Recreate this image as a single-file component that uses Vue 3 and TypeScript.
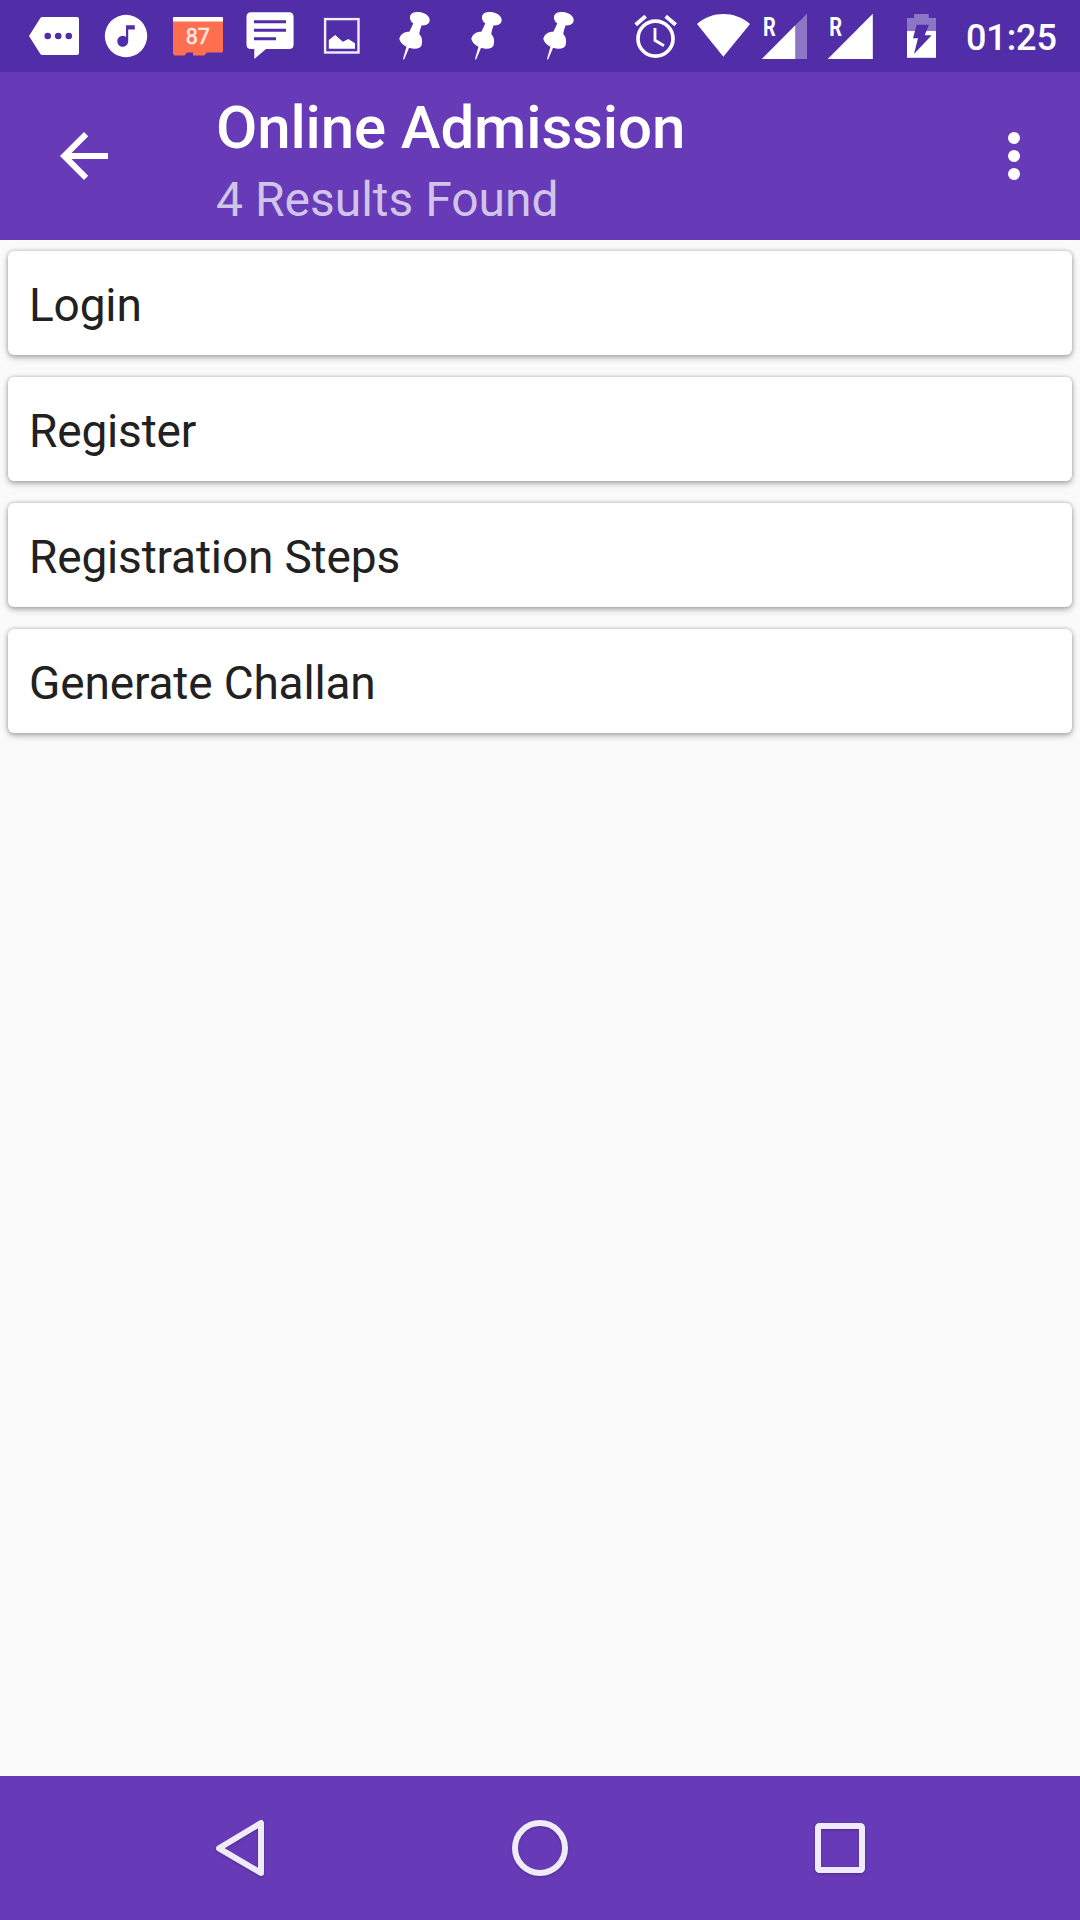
<script setup lang="ts">
const results: string[] = ['Login', 'Register', 'Registration Steps', 'Generate Challan']
const pins: number[] = [1, 2, 3]
</script>

<template>
  <div class="screen">
    <header class="status-bar">
      <div class="notifications">
        <svg viewBox="18 0 72 72" class="notice">
          <path fill="#fff" d="M29 36L40.2 18.3Q41 17 42.5 17H77Q79 17 79 19V53Q79 55 77 55H42.5Q41 55 40.2 53.7Z" />
          <g fill="#512da8"><circle cx="47.7" cy="36" r="3.3" /><circle cx="58.2" cy="36" r="3.3" /><circle cx="68.8" cy="36" r="3.3" /></g>
        </svg>
        <svg viewBox="90 0 72 72" class="notice">
          <circle cx="126" cy="36" r="21.2" fill="#fff" />
          <path fill="#512da8" d="M126 25.2H134.8V29.4H128.2V41.3A5.5 5.5 0 1 1 126 36.9Z" />
        </svg>
        <svg viewBox="162 0 72 72" class="notice">
          <path fill="#ff6e4e" d="M173 21H223V51.5L222 52.6H207L204.2 55.6H193V52.6H187L184.5 55.6H174.5L173 54Z" />
          <path fill="#fff" d="M173 21.6V18.2Q173 17 174.2 17H221.8Q223 17 223 18.2V21.6Z" />
          <text x="197.8" y="43.8" text-anchor="middle" font-size="21.5" fill="#ffe9e4" stroke="#ffe9e4" stroke-width=".5">87</text>
        </svg>
        <svg viewBox="234 0 72 72" class="notice">
          <path fill="#fff" d="M251 12.3H289Q293.6 12.3 293.6 17V44.5Q293.6 49 289 49H266L254.3 59V49H251Q246.5 49 246.5 44.5V17Q246.5 12.3 251 12.3Z" />
          <path fill="#512da8" d="M254 20.2H286V23.2H254ZM254 28.8H286V31.8H254ZM254 37.2H276V40.2H254Z" />
        </svg>
        <svg viewBox="306 0 72 72" class="notice">
          <rect x="325.1" y="19.1" width="33.4" height="33.4" fill="none" stroke="#fff" stroke-opacity=".92" stroke-width="2.4" />
          <path fill="#fff" d="M328.8 40L335.2 35L342.8 41.8L348.4 39L355 43.3V48.8H328.8Z" />
        </svg>
        <svg v-for="pin in pins" :key="pin" viewBox="378 0 72 72" class="notice">
          <g transform="translate(220 0) scale(.33333)" fill="#fff">
            <path d="M570 50C572 36 590 35 602 37C618 40 630 50 629 63C627 74 614 77 605 76C602 85 598 95 598 103C606 110 608 122 605 136C600 146 590 147 580 146C562 144 542 134 538 117C540 103 552 95 568 95C573 86 577 77 580 70C573 66 569 58 570 50Z" />
            <path d="M560 138L568 142L552 179L549 177Z" />
          </g>
        </svg>
      </div>
      <div class="system">
        <svg viewBox="620 0 70 72" width="70" height="72">
          <g transform="translate(610 0) scale(.33333)" fill="none" stroke="#fff">
            <circle cx="136.5" cy="116" r="52.5" stroke-width="11" />
            <path d="M77 74L107 49M167 49L197 74" stroke-width="12" />
            <path d="M135 84V121L162 137" stroke-width="8.5" />
          </g>
        </svg>
        <svg viewBox="690 0 65 72" width="65" height="72">
          <path transform="translate(610 0) scale(.33333)" fill="#fff" d="M340 170L261 72C285 51 312 42 340 42S396 51 420 72Z" />
        </svg>
        <svg viewBox="755 0 66 72" width="66" height="72">
          <path fill="#fff" fill-opacity=".35" d="M795.3 25.3L807 13.7V59H795.3Z" />
          <path fill="#fff" d="M761.7 59L795.3 25.3V59Z" />
          <text class="roaming" transform="translate(763.1 35.5) scale(.8 1)">R</text>
        </svg>
        <svg viewBox="821 0 66 72" width="66" height="72">
          <path fill="#fff" d="M827.7 59L872.8 13.7V59Z" />
          <text class="roaming" transform="translate(829.3 35.5) scale(.8 1)">R</text>
        </svg>
        <svg viewBox="887 0 75 72" width="75" height="72">
          <path fill="#fff" fill-opacity=".35" d="M907 31V18H914V14H928.7V18H936V31Z" />
          <path fill="#fff" d="M907 31H936V57.8H907Z" />
          <path transform="translate(820 0) scale(.33333)" fill="#512da8" d="M290 74H327L314 106H335L282 162L294 115H279Z" />
        </svg>
        <span class="clock">01:25</span>
      </div>
    </header>

    <div class="toolbar">
      <svg class="action" viewBox="0 0 24 24">
        <path fill="#fff" d="M20 11H7.83l5.59-5.59L12 4l-8 8 8 8 1.41-1.41L7.83 13H20v-2z" />
      </svg>
      <div class="titles">
        <h1>Online Admission</h1>
        <p>4 Results Found</p>
      </div>
      <svg class="action" viewBox="0 0 24 24">
        <g fill="#fff"><circle cx="12" cy="6" r="2" /><circle cx="12" cy="12" r="2" /><circle cx="12" cy="18" r="2" /></g>
      </svg>
    </div>

    <main class="list">
      <div v-for="item in results" :key="item" class="card">{{ item }}</div>
    </main>

    <nav class="nav-bar">
      <svg viewBox="0 0 72 72"><path d="M15 36.3L57 11V61Z" /></svg>
      <svg viewBox="0 0 72 72"><circle cx="36" cy="36" r="25" /></svg>
      <svg viewBox="0 0 72 72"><rect x="14" y="14" width="44" height="44" rx="1.5" /></svg>
    </nav>
  </div>
</template>

<style>
body {
  margin: 0;
}
</style>

<style scoped>
.screen {
  display: flex;
  flex-direction: column;
  width: 1080px;
  height: 1920px;
  overflow: hidden;
  background: #fafafa;
  font-family: Roboto, "Liberation Sans", sans-serif;
}
svg {
  display: block;
  flex: none;
}
.status-bar {
  display: flex;
  flex: none;
  height: 72px;
  background: #512da8;
}
.notifications {
  display: flex;
  width: 602px;
  padding-left: 18px;
}
.notice {
  width: 72px;
  height: 72px;
}
.system {
  display: flex;
}
.roaming {
  font-size: 25px;
  font-weight: 700;
  fill: #fff;
}
.clock {
  margin-left: 4px;
  color: #fff;
  font-size: 36px;
  font-weight: 500;
  letter-spacing: -0.1px;
  line-height: 76px;
}
.toolbar {
  display: flex;
  flex: none;
  align-items: center;
  box-sizing: border-box;
  height: 168px;
  padding: 0 30px 0 48px;
  background: #673ab7;
}
.action {
  width: 72px;
  height: 72px;
}
.titles {
  flex: 1;
  margin-left: 96px;
  padding-top: 16px;
}
h1,
p {
  margin: 0;
  font-weight: 400;
  white-space: nowrap;
}
h1 {
  color: #fff;
  font-size: 60px;
  font-weight: 500;
  letter-spacing: -0.14px;
  line-height: 72px;
}
p {
  color: #d1c4e9;
  font-size: 48px;
  line-height: 72px;
}
.list {
  display: flex;
  flex: 1;
  flex-direction: column;
  gap: 22px;
  padding: 11px 8px 0;
}
.card {
  box-sizing: border-box;
  height: 104px;
  padding-left: 21px;
  border-radius: 6px;
  background: #fff;
  box-shadow: 0 3px 6px rgba(0, 0, 0, 0.25), 0 0 4px rgba(0, 0, 0, 0.25);
  color: #212121;
  font-size: 46px;
  letter-spacing: -0.16px;
  line-height: 108px;
}
.nav-bar {
  display: flex;
  flex: none;
  align-items: center;
  justify-content: center;
  gap: 228px;
  height: 144px;
  background: #673ab7;
}
.nav-bar svg {
  width: 72px;
  height: 72px;
  fill: none;
  stroke: #f0ebf8;
  stroke-width: 6;
  stroke-linejoin: round;
  filter: drop-shadow(0 1px 1px rgba(0, 0, 0, 0.25));
}
</style>
